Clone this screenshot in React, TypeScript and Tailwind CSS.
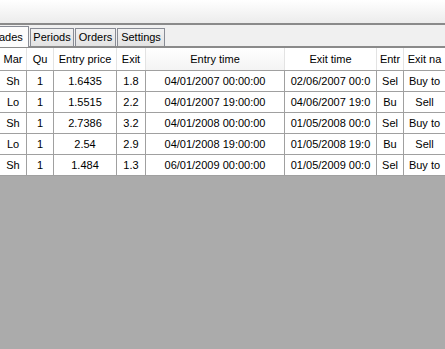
import React from 'react';

const COLS = ['Mar', 'Qu', 'Entry price', 'Exit', 'Entry time', 'Exit time', 'Entr', 'Exit na'];

const ROWS = [
  ['Sh', '1', '1.6435', '1.8', '04/01/2007 00:00:00', '02/06/2007 00:0', 'Sel', 'Buy to'],
  ['Lo', '1', '1.5515', '2.2', '04/01/2007 19:00:00', '04/06/2007 19:0', 'Bu', 'Sell'],
  ['Sh', '1', '2.7386', '3.2', '04/01/2008 00:00:00', '01/05/2008 00:0', 'Sel', 'Buy to'],
  ['Lo', '1', '2.54', '2.9', '04/01/2008 19:00:00', '01/05/2008 19:0', 'Bu', 'Sell'],
  ['Sh', '1', '1.484', '1.3', '06/01/2009 00:00:00', '01/05/2009 00:0', 'Sel', 'Buy to'],
];

const GRID = 'grid grid-cols-[27px_27px_63px_29px_139px_92px_27px_1fr]';

const TABS = [
  { t: 'Periods', w: 'w-[44px]' },
  { t: 'Orders', w: 'w-[41px]' },
  { t: 'Settings', w: 'w-[48px]' },
];

export default function App() {
  return (
    <div
      className="w-[445px] h-[349px] overflow-hidden flex flex-col bg-[#ababab] text-[11px] text-black"
      style={{ fontFamily: '"Liberation Sans", Arial, sans-serif' }}
    >
      {/* window chrome above the tabs */}
      <div className="h-[25px] shrink-0 bg-gradient-to-b from-white to-[#ececec] border-b-2 border-[#8a8a8a]" />

      {/* tab strip */}
      <div className="h-[23px] shrink-0 bg-[#f0f0f0] flex items-end border-b-2 border-[#8a8a8a]">
        <div className="h-[21px] w-[29px] -mb-[1px] bg-[#fcfcfc] border-t border-r border-[#898c95] flex items-center overflow-hidden whitespace-nowrap">
          <span className="-ml-[1px]">ades</span>
        </div>
        {TABS.map(({ t, w }) => (
          <div
            key={t}
            className={`${w} h-[18px] ml-[1px] bg-gradient-to-b from-[#f2f2f2] to-[#e3e3e3] border-t border-l border-r border-[#898c95] flex items-center justify-center`}
          >
            {t}
          </div>
        ))}
      </div>

      {/* data grid */}
      <div className="bg-white shrink-0">
        <div className={`${GRID} h-[23px] border-b border-[#a0a0a0]`}>
          {COLS.map((c, i) => (
            <div
              key={c}
              className={`flex items-center justify-center overflow-hidden whitespace-nowrap ${i < COLS.length - 1 ? 'border-r border-[#e3e3e3]' : ''} ${i === 4 ? 'bg-gradient-to-b from-white to-[#f4f4f4]' : ''}`}
            >
              {c}
            </div>
          ))}
        </div>
        {ROWS.map((r, ri) => (
          <div key={ri} className={`${GRID} h-[21px] border-b border-[#a0a0a0]`}>
            {r.map((v, i) => (
              <div
                key={i}
                className={`flex items-center justify-center overflow-hidden whitespace-nowrap ${i < r.length - 1 ? 'border-r border-[#a0a0a0]' : ''}`}
              >
                {v}
              </div>
            ))}
          </div>
        ))}
      </div>
    </div>
  );
}
